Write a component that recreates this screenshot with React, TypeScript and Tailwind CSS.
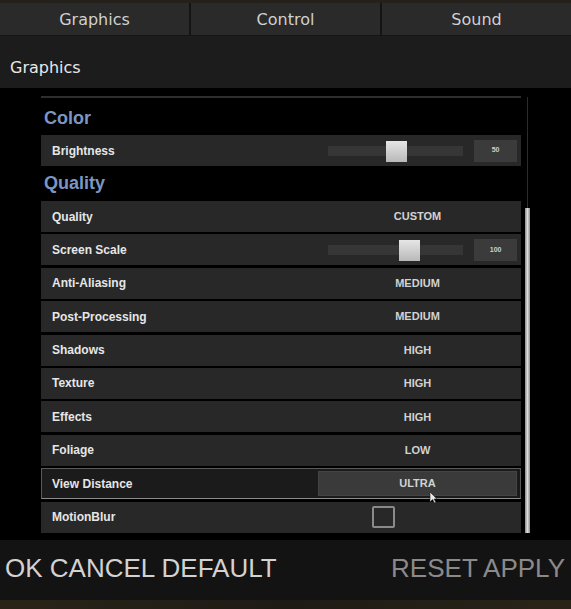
import React from "react";

type Row =
  | { label: string; kind: "value"; value: string; active?: boolean }
  | { label: string; kind: "slider"; value: string; pos: number }
  | { label: string; kind: "check" };

const qualityRows: Row[] = [
  { label: "Quality", kind: "value", value: "CUSTOM" },
  { label: "Screen Scale", kind: "slider", value: "100", pos: 81 },
  { label: "Anti-Aliasing", kind: "value", value: "MEDIUM" },
  { label: "Post-Processing", kind: "value", value: "MEDIUM" },
  { label: "Shadows", kind: "value", value: "HIGH" },
  { label: "Texture", kind: "value", value: "HIGH" },
  { label: "Effects", kind: "value", value: "HIGH" },
  { label: "Foliage", kind: "value", value: "LOW" },
  { label: "View Distance", kind: "value", value: "ULTRA", active: true },
  { label: "MotionBlur", kind: "check" },
];

const sans = "font-['Liberation_Sans',Arial,sans-serif]";

function Slider({ value, pos }: { value: string; pos: number }) {
  return (
    <div className="flex h-full items-center pl-[10px]">
      <div className="relative h-[10px] w-[136px] bg-[#363636]">
        <div
          className="absolute top-[-5px] h-[21px] w-[21px] bg-gradient-to-b from-[#e6e6e6] to-[#b9b9b9]"
          style={{ left: pos - 10 }}
        />
      </div>
      <div className="ml-[11px] flex h-[22px] w-[43px] items-center justify-center bg-[#3b3b3b] text-[7px] font-bold text-[#cfcfcf]">
        {value}
      </div>
    </div>
  );
}

function SettingRow({ row }: { row: Row }) {
  const active = row.kind === "value" && row.active;
  return (
    <div
      className={
        "flex h-[31px] items-center " +
        (active
          ? "border border-[#5a5a5a] border-b-[#8c8c8c] bg-[#1b1b1b]"
          : "bg-[#282828]")
      }
    >
      <div
        className={
          "w-[277px] pl-[11px] text-[12px] font-bold text-[#e6e6e6] " + (active ? "-ml-px" : "")
        }
      >
        {row.label}
      </div>
      <div className={"h-full w-[199px] " + (active ? "py-[2px]" : "")}>
        {row.kind === "value" && (
          <div
            className={
              "flex h-full items-center justify-center text-[11px] font-bold text-[#d2d2d2] " +
              (active ? "border border-[#444] bg-[#3a3a3a]" : "")
            }
          >
            {row.value}
          </div>
        )}
        {row.kind === "slider" && <Slider value={row.value} pos={row.pos} />}
        {row.kind === "check" && (
          <div className="flex h-full items-center pl-[54px]">
            <div className="h-[22px] w-[23px] rounded-[2px] border-2 border-[#8a8a8a]" />
          </div>
        )}
      </div>
    </div>
  );
}

export default function App() {
  const tabs = ["Graphics", "Control", "Sound"];
  return (
    <div className={`relative flex h-[609px] w-[571px] flex-col overflow-hidden bg-black ${sans}`}>
      <div className="h-[3px] bg-[#24201a]" />
      <div className="flex h-[33px] gap-[2px] bg-[#141414] pb-[1px]">
        {tabs.map((t) => (
          <div
            key={t}
            className="flex flex-1 items-center justify-center bg-[#2a2a2a] pt-[2px] font-['DejaVu_Sans',sans-serif] text-[16px] text-[#d0d0d0]"
          >
            {t}
          </div>
        ))}
      </div>
      <div className="flex h-[52px] items-center bg-[#1c1c1c] pl-[10px] pt-[12px] font-['DejaVu_Sans',sans-serif] text-[16px] text-[#e8e8e8]">
        Graphics
      </div>

      <div className="flex flex-1 bg-black pl-[41px]">
        <div className="flex w-[480px] flex-col pt-[8px]">
          <div className="h-[2px] bg-[#2e2e2e]" />
          <div className="flex h-[37px] items-center pl-[3px] pt-[4px] text-[18px] font-bold text-[#7c96c3]">
            Color
          </div>
          <SettingRow row={{ label: "Brightness", kind: "slider", value: "50", pos: 68 }} />
          <div className="flex h-[35px] items-center pl-[3px] text-[18px] font-bold text-[#7c96c3]">
            Quality
          </div>
          <div className="flex flex-col gap-[2.4px]">
            {qualityRows.map((r) => (
              <SettingRow key={r.label} row={r} />
            ))}
          </div>
        </div>
        <div className="ml-[4px] flex w-[5px] flex-col items-center pt-[9px] pb-[7px]">
          <div className="h-[111px] w-px bg-[#2c2c2c]" />
          <div className="w-[5px] flex-1 bg-gradient-to-r from-[#8a8a8a] via-[#dcdcdc] to-[#8a8a8a]" />
        </div>
      </div>

      <div className="flex h-[60px] items-center justify-between bg-[#141313] pb-[4px] pl-[5px] pr-[6px] text-[26px] leading-none">
        <div className="text-[#d2d2d2]">OK CANCEL DEFAULT</div>
        <div className="text-[#8a8a8a]">RESET APPLY</div>
      </div>
      <div className="h-[9px] bg-gradient-to-r from-[#2a2418] via-[#1e1b15] to-[#2a2418]" />

      <svg
        className="absolute left-[429px] top-[491px]"
        width="9"
        height="13"
        viewBox="0 0 9 13"
      >
        <path d="M1 1 L1 11 L3.5 8.5 L5.5 12 L7 11.2 L5 8 L8 8 Z" fill="#e8e8e8" stroke="#222" strokeWidth="0.6" />
      </svg>
    </div>
  );
}
